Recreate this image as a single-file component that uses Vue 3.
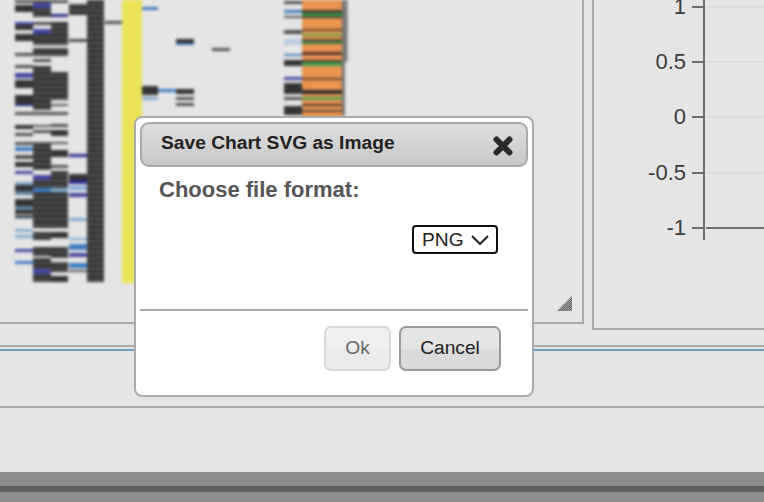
<script setup>
const C = { d: 'url(#darkRows)', k: '#333333', g: '#505050', b: '#3f7cc0', l: '#7fabd2', p: '#45459f', n: '#2a2a8c', u: '#bccde2', s: '#5f80a0' }
const cols = { A: [15, 18], B: [33, 18], C: [51, 17], D: [69, 18], F: [142, 16], L: [158, 18], G: [176, 18], H: [212, 18], I: [284, 18], X: [105, 17] }
const raw = [
  ['A',0,3,'g'],['A',5,12,'k'],['A',22,25,'p'],['A',25,30,'k'],['A',34,41,'k'],['A',53,56,'g'],['A',65,68,'g'],['A',73,78,'p'],['A',80,88,'k'],['A',95,104,'k'],['A',104,106,'n'],['A',112,115,'g'],['A',125,129,'k'],['A',133,136,'g'],['A',142,145,'g'],['A',147,151,'b'],['A',155,159,'g'],['A',162,167,'k'],['A',171,174,'p'],['A',182,185,'l'],['A',185,191,'k'],['A',191,195,'s'],['A',199,206,'k'],['A',206,210,'s'],['A',210,214,'k'],['A',215,218,'g'],['A',218,219,'l'],['A',229,232,'l'],['A',235,238,'l'],['A',249,252,'p'],['A',261,264,'b'],
  ['B',0,3,'g'],['B',3,8,'p'],['B',8,17,'d'],['B',22,25,'g'],['B',29,34,'p'],['B',34,45,'d'],['B',48,56,'d'],['B',59,62,'g'],['B',66,110,'d'],['B',112,115,'g'],['B',125,127,'g'],['B',130,133,'g'],['B',142,145,'g'],['B',145,170,'d'],['B',175,180,'p'],['B',180,188,'d'],['B',188,192,'b'],['B',192,228,'d'],['B',232,240,'d'],['B',247,256,'d'],['B',258,269,'d'],['B',269,274,'p'],['B',274,282,'d'],
  ['C',0,3,'g'],['C',14,17,'n'],['C',22,45,'d'],['C',48,56,'d'],['C',72,100,'d'],['C',104,106,'g'],['C',112,115,'g'],['C',124,127,'g'],['C',130,136,'k'],['C',142,144,'g'],['C',150,157,'k'],['C',165,168,'g'],['C',171,188,'d'],['C',188,192,'l'],['C',192,228,'d'],['C',232,238,'k'],['C',247,258,'d'],['C',262,272,'d'],['C',276,282,'k'],
  ['D',4,15,'d'],['D',39,42,'g'],['D',154,157,'n'],['D',174,180,'k'],['D',180,184,'n'],['D',186,190,'l'],['D',193,197,'p'],['D',218,221,'l'],['D',238,240,'l'],['D',244,250,'b'],['D',253,257,'p'],['D',263,268,'b'],['D',270,272,'g'],
  ['X',21,24,'g'],
  ['F',7,10,'b'],['F',86,95,'k'],['F',97,100,'l'],['L',89,92,'b'],
  ['G',39,43,'k'],['G',43,45,'b'],['G',89,94,'k'],['G',97,100,'g'],['G',103,106,'g'],['H',48,51,'g'],
  ['I',1,4,'g'],['I',10,13,'b'],['I',16,18,'g'],['I',30,34,'g'],['I',39,45,'u'],['I',54,56,'b'],['I',60,66,'k'],['I',77,80,'p'],['I',83,94,'k'],['I',97,100,'g'],['I',106,115,'k']
]
const cells = raw.map(([c, y0, y1, t]) => ({ x: cols[c][0], w: cols[c][1], y: y0, h: y1 - y0, fill: C[t] }))
const orangeRows = [
  [10,3,'#4a3c30'],[13,3,'#2f9a4c'],[16,2,'#4a3c30'],[29,2,'#5e4430'],[34,2,'#55a34c'],[39,2,'#5e4430'],[41,3,'#3f8245'],[52,3,'#4a3428'],[60,2,'#4a3428'],[62,4,'#42a052'],[78,2,'#5e4430'],[90,4,'#2e2e2e'],[97,3,'#55a34c'],[104,2,'#4a3428'],[110,2,'#5e4430']
]
const ticks = [
  { label: '1', y: 7 }, { label: '0.5', y: 62 }, { label: '0', y: 117 }, { label: '-0.5', y: 173 }, { label: '-1', y: 228 }
]
</script>

<template>
  <div class="page">
    <div class="panels">
      <div class="panel panel-left">
        <div class="heat-wrap">
          <svg width="360" height="300" viewBox="0 0 360 300">
            <defs>
              <pattern id="darkRows" width="6" height="5.5" patternUnits="userSpaceOnUse">
                <rect width="6" height="5.5" fill="#5a5a5a" /><rect width="6" height="4" fill="#363636" />
              </pattern>
              <pattern id="yellowRows" width="6" height="5.5" patternUnits="userSpaceOnUse">
                <rect width="6" height="5.5" fill="#e6df66" /><rect width="6" height="4.3" fill="#ece451" />
              </pattern>
            </defs>
            <rect x="87" y="-2" width="17" height="284" fill="url(#darkRows)" />
            <rect x="122" y="-2" width="20" height="285" fill="url(#yellowRows)" />
            <rect x="342" y="-2" width="5.5" height="64" fill="#777" />
            <rect x="342" y="60" width="3" height="56" fill="#777" />
            <rect x="302" y="-2" width="40" height="120" fill="#ea9450" />
            <rect v-for="(r, i) in orangeRows" :key="'o' + i" x="302" :y="r[0]" width="40" :height="r[1]" :fill="r[2]" />
            <rect v-for="(c, i) in cells" :key="i" :x="c.x" :y="c.y" :width="c.w" :height="c.h" :fill="c.fill" />
          </svg>
        </div>
        <svg class="grip" width="15" height="16" viewBox="0 0 15 16">
          <defs>
            <pattern id="dots" width="2" height="2" patternUnits="userSpaceOnUse">
              <rect width="2" height="2" fill="#a0a0a0" />
              <rect width="1" height="1" fill="#666" /><rect x="1" y="1" width="1" height="1" fill="#666" />
            </pattern>
          </defs>
          <polygon points="15,0 15,15 0,15" fill="url(#dots)" />
        </svg>
      </div>
      <div class="panel panel-right">
        <svg class="axis" width="170" height="330" viewBox="594 0 170 330">
          <template v-for="t in ticks" :key="t.label">
            <line x1="706" x2="764" :y1="t.y" :y2="t.y" :stroke="t.label === '-1' ? '#6e6e6e' : '#dcdcdc'" stroke-width="2" />
            <line x1="692" x2="704" :y1="t.y" :y2="t.y" stroke="#6e6e6e" stroke-width="2" />
            <text x="686" :y="t.y + 7" text-anchor="end" class="tick">{{ t.label }}</text>
          </template>
          <line x1="704" x2="704" y1="-2" y2="240" stroke="#6e6e6e" stroke-width="2" />
        </svg>
      </div>
    </div>
    <div class="rule rule-a"></div>
    <div class="rule-blue"></div>
    <div class="rule rule-b"></div>
    <div class="footer"><div class="footer-stripe"></div></div>

    <div class="dialog">
      <div class="dialog-head">
        <span class="dialog-title">Save Chart SVG as Image</span>
        <svg class="close" width="20" height="20" viewBox="0 0 20 20">
          <path d="M3.5 3.5 L16.5 16.5 M16.5 3.5 L3.5 16.5" stroke="#2b2b2b" stroke-width="6" stroke-linecap="round" />
        </svg>
      </div>
      <div class="dialog-body">
        <div class="choose">Choose file format:</div>
        <div class="select-row">
          <div class="select">
            <span>PNG</span>
            <svg width="18" height="10" viewBox="0 0 18 10">
              <path d="M1 1 L9 9 L17 1" fill="none" stroke="#222" stroke-width="2" />
            </svg>
          </div>
        </div>
      </div>
      <div class="dialog-foot">
        <button class="btn btn-ok" type="button">Ok</button>
        <button class="btn btn-cancel" type="button">Cancel</button>
      </div>
    </div>
  </div>
</template>

<style>
html, body { margin: 0; background: #e5e5e5; }
</style>

<style scoped>
.page {
  position: relative;
  width: 764px;
  height: 502px;
  overflow: hidden;
  background: #e5e5e5;
  font-family: "Liberation Sans", Arial, sans-serif;
}
.panels {
  display: flex;
  align-items: flex-start;
  gap: 8px;
  height: 345px;
}
.panel {
  position: relative;
  box-sizing: border-box;
  border: 2px solid #aaa;
  border-top: 0;
}
.panel-left {
  width: 584px;
  height: 324px;
  border-left: 0;
}
.panel-right {
  flex: 1;
  height: 330px;
  border-right: 0;
}
.heat-wrap {
  position: absolute;
  left: 0;
  top: 0;
  width: 360px;
  height: 300px;
  filter: blur(1.4px);
}
.heat-wrap svg { display: block; }
.grip { position: absolute; right: 10px; bottom: 10px; }
.axis { position: absolute; left: 0; top: 0; }
.tick { font-size: 22px; fill: #3c3c3c; font-family: "Liberation Sans", Arial, sans-serif; }
.rule { height: 2px; background: #aaa; }
.rule-blue { height: 2px; margin-top: 2px; background: #6a9fbe; }
.rule-b { margin-top: 55px; }
.footer {
  margin-top: 64px;
  height: 30px;
  padding-top: 14px;
  box-sizing: border-box;
  background: #8c8c8c;
}
.footer-stripe { height: 6px; background: #5f5f5f; }

.dialog {
  position: absolute;
  left: 134px;
  top: 116px;
  width: 400px;
  height: 281px;
  box-sizing: border-box;
  padding: 4px;
  display: flex;
  flex-direction: column;
  background: #fff;
  border: 2px solid #aaa;
  border-radius: 8px;
}
.dialog-head {
  height: 45px;
  box-sizing: border-box;
  display: flex;
  align-items: center;
  justify-content: space-between;
  padding: 0 13px 4px 19px;
  background: linear-gradient(#dedede, #c8c8c8);
  border: 2px solid #aaa;
  border-radius: 9px;
}
.dialog-title { font-size: 19.2px; font-weight: 700; color: #222; }
.close { margin-top: 6px; }
.dialog-body {
  height: 144px;
  box-sizing: border-box;
  padding: 10px 30px 0 19px;
  border-bottom: 2px solid #aaa;
}
.choose { font-size: 22px; line-height: 26px; font-weight: 700; color: #555; }
.select-row { display: flex; justify-content: flex-end; margin-top: 22px; }
.select {
  width: 86px;
  height: 29px;
  box-sizing: border-box;
  display: flex;
  align-items: center;
  gap: 7px;
  padding-left: 8px;
  border: 2px solid #111;
  border-radius: 4px;
  background: #fff;
  font-size: 19.2px;
  color: #222;
}
.dialog-foot {
  display: flex;
  justify-content: flex-end;
  gap: 8px;
  padding: 15px 27px 0 0;
}
.btn {
  height: 45px;
  padding: 0 0 2px;
  box-sizing: border-box;
  border-radius: 7px;
  font-family: inherit;
  font-size: 19.2px;
}
.btn-ok {
  width: 67px;
  color: #666;
  border: 2px solid #d8d8d8;
  background: linear-gradient(#f0f0f0 50%, #ebebeb 50%);
}
.btn-cancel {
  width: 102px;
  color: #222;
  border: 2px solid #999;
  background: linear-gradient(#e5e5e5 50%, #dadada 50%);
}
</style>
